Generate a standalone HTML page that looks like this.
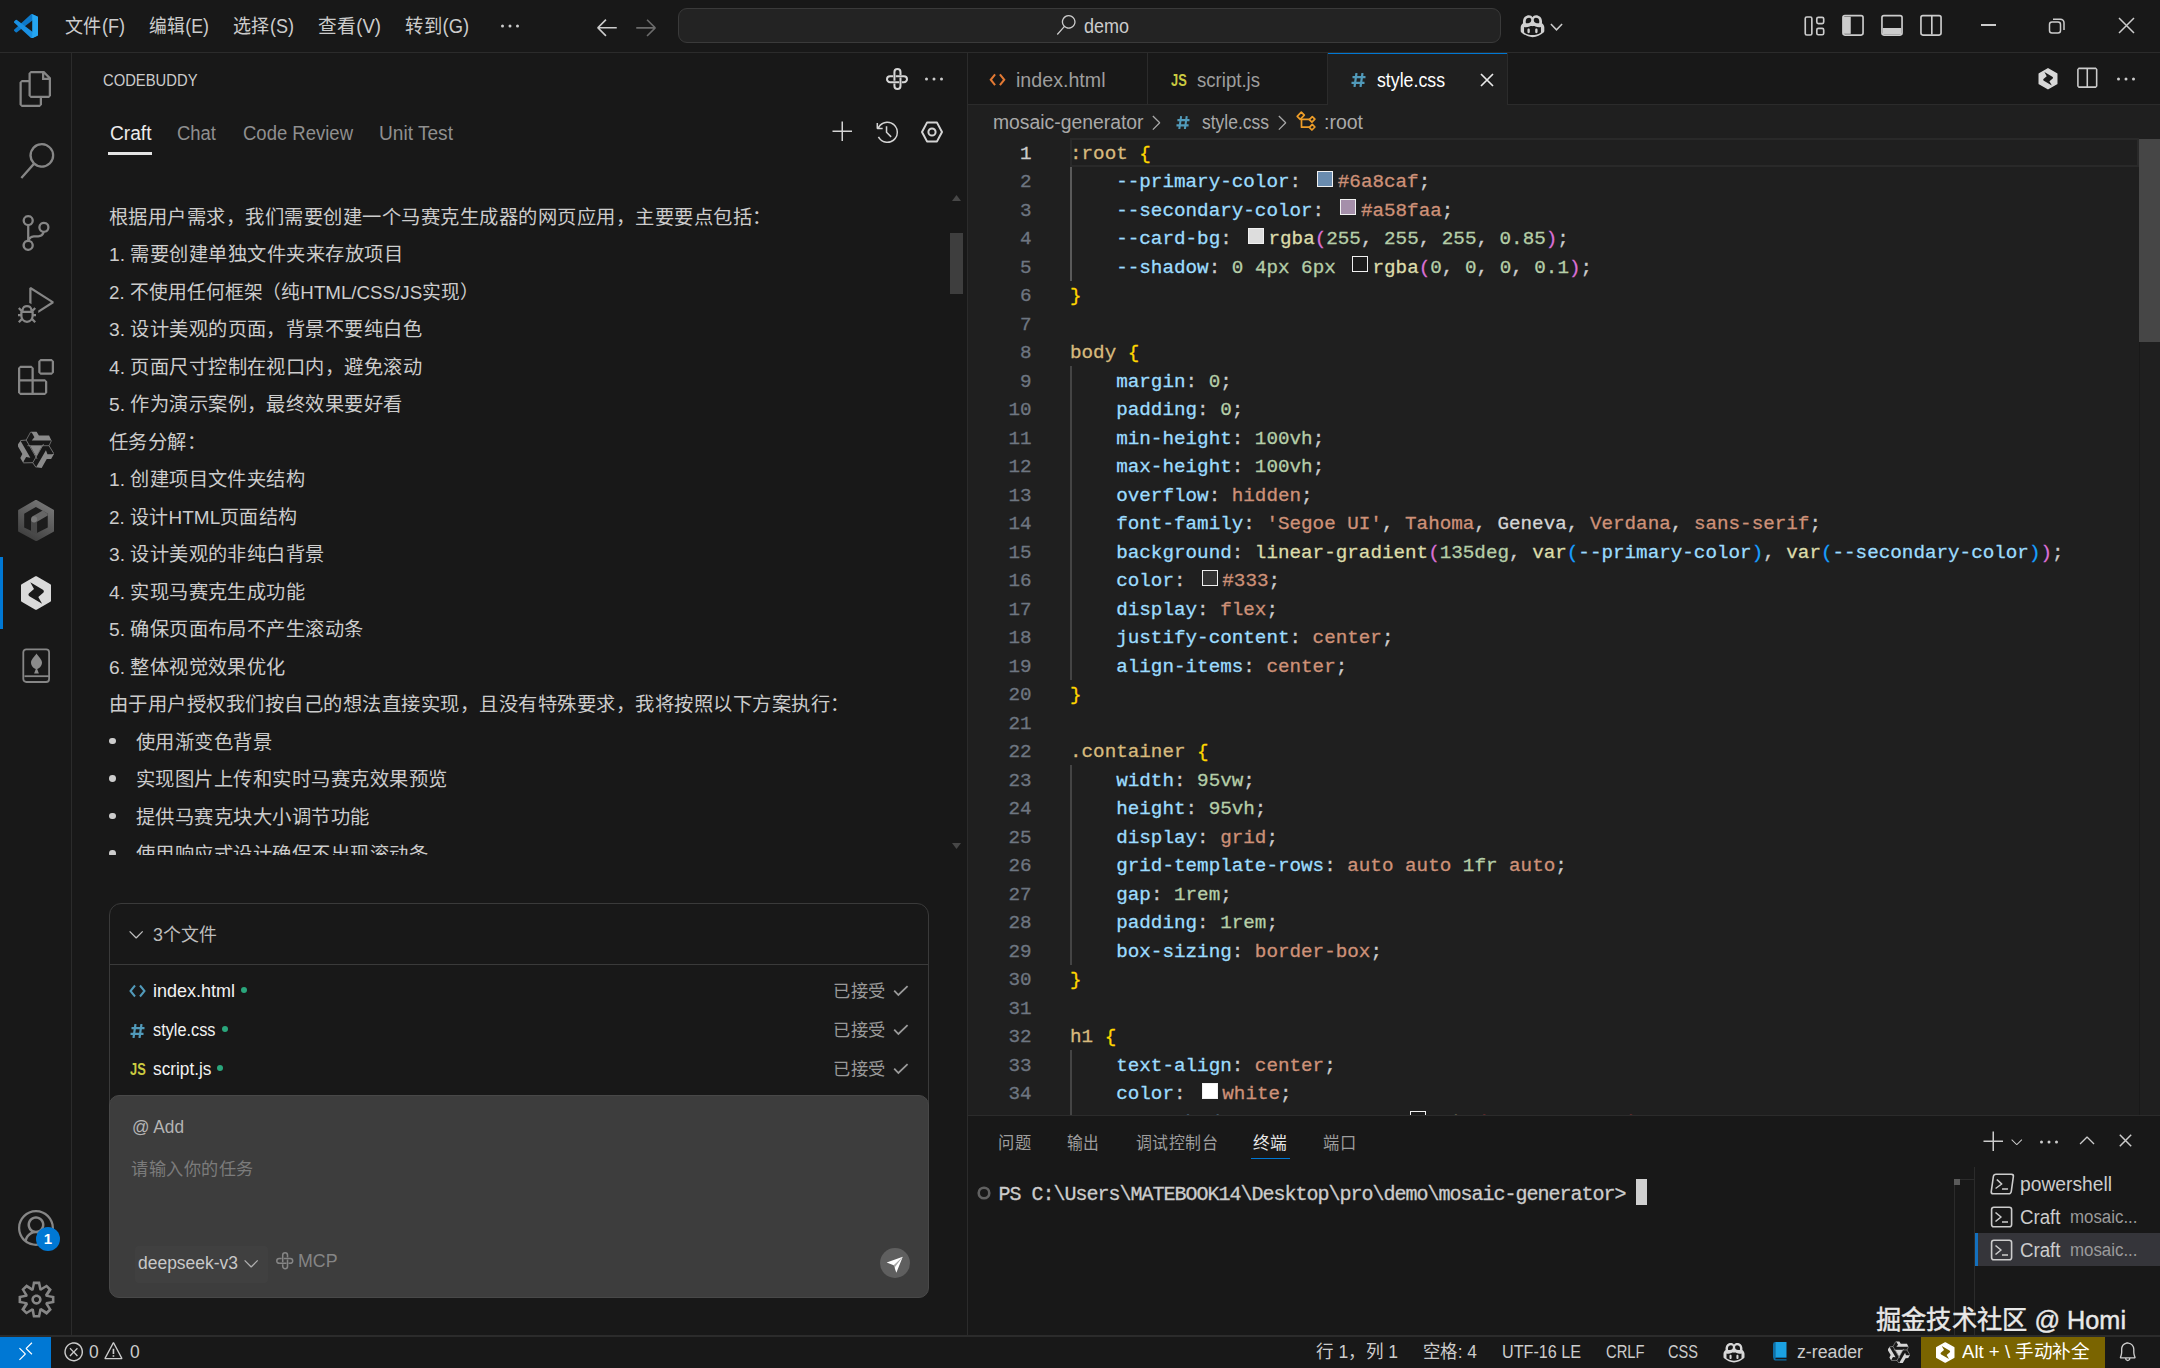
<!DOCTYPE html>
<html lang="zh-CN"><head><meta charset="utf-8"><title>style.css - demo - Visual Studio Code</title>
<style>
html,body{margin:0;padding:0;}
body{width:2160px;height:1368px;overflow:hidden;position:relative;background:#181818;font-family:"Liberation Sans", sans-serif;}
div,span.t,svg{position:absolute;}
span.t{white-space:nowrap;transform-origin:0 50%;}
.c{position:absolute;white-space:pre;font-family:"Liberation Mono", monospace;font-size:19.25px;line-height:28.5px;left:1070px;color:#cccccc;-webkit-text-stroke:0.3px;}
.c i{font-style:normal;}
.sw{display:inline-block;box-sizing:border-box;width:16px;height:16px;margin:0 4.6px;border:1.6px solid #f0f0f0;vertical-align:0.5px;}
</style></head>
<body>
<div style="left:0px;top:0px;width:2160px;height:1368px;background:#181818;"></div>
<div style="left:968px;top:105px;width:1192px;height:1010px;background:#1f1f1f;"></div>
<div style="left:0px;top:52px;width:2160px;height:1px;background:#2b2b2b;"></div>
<div style="left:71px;top:53px;width:1px;height:1283px;background:#2b2b2b;"></div>
<div style="left:967px;top:53px;width:1px;height:1283px;background:#2b2b2b;"></div>
<div style="left:968px;top:104px;width:1192px;height:1px;background:#2b2b2b;"></div>
<div style="left:968px;top:1115px;width:1192px;height:1px;background:#2b2b2b;"></div>
<div style="left:0px;top:1335px;width:2160px;height:2px;background:#2b2b2b;"></div>
<svg style="left:14px;top:13.6px;" width="24.3" height="24.3" viewBox="0 0 100 100"><path fill="#0d78c8" d="M96.5 10.8 75.9.9a6.2 6.2 0 0 0-7.1 1.2L1.3 63.600a4.200 4.200 0 0 0 0 6.200l5.500 5a4.200 4.200 0 0 0 5.300.200L93.300 13.500c2.700-2.100 6.700-.100 6.700 3.300v-.200a6.300 6.300 0 0 0-3.500-5.800z"/><path fill="#1a90e2" d="M96.500 89.200 75.900 99.100a6.200 6.200 0 0 1-7.100-1.200L1.300 36.400a4.200 4.200 0 0 1 0-6.200l5.500-5a4.200 4.200 0 0 1 5.300-.2l81.200 61.500c2.700 2.100 6.700.1 6.700-3.300v.2a6.300 6.300 0 0 1-3.500 5.800z"/><path fill="#25a6f2" d="M75.900 99.100a6.200 6.200 0 0 1-7.100-1.200c2.300 2.300 6.200.700 6.200-2.600V4.700c0-3.300-3.900-4.900-6.200-2.600a6.200 6.200 0 0 1 7.100-1.200l20.600 9.900a6.200 6.200 0 0 1 3.500 5.600v67.200a6.200 6.200 0 0 1-3.500 5.600z"/></svg>
<span class="t" style="transform:scaleX(0.9244);top:10.74px;font-size:19.5px;line-height:30px;color:#cccccc;left:64.5px;">文件(F)</span>
<span class="t" style="transform:scaleX(0.9091);top:10.74px;font-size:19.5px;line-height:30px;color:#cccccc;left:149px;">编辑(E)</span>
<span class="t" style="transform:scaleX(0.9242);top:10.74px;font-size:19.5px;line-height:30px;color:#cccccc;left:233px;">选择(S)</span>
<span class="t" style="transform:scaleX(0.9545);top:10.74px;font-size:19.5px;line-height:30px;color:#cccccc;left:318px;">查看(V)</span>
<span class="t" style="transform:scaleX(0.939);top:10.74px;font-size:19.5px;line-height:30px;color:#cccccc;left:405px;">转到(G)</span>
<svg style="left:498px;top:14px;" width="24" height="24" viewBox="0 0 16 16"><path fill="#cccccc" d="M4 8a1 1 0 1 1-2 0 1 1 0 0 1 2 0zm5 0a1 1 0 1 1-2 0 1 1 0 0 1 2 0zm5 0a1 1 0 1 1-2 0 1 1 0 0 1 2 0z"/></svg>
<svg style="left:594px;top:14px;" width="26" height="26" viewBox="0 0 16 16"><path fill="#cccccc" d="M7 3.093l-5 5V8.8l5 5 .707-.707-4.146-4.147H14v-1H3.56L7.708 3.8 7 3.093z"/></svg>
<svg style="left:633px;top:14px;" width="26" height="26" viewBox="0 0 16 16"><path fill="#6b6b6b" d="M9 13.887l5-5V8.18l-5-5-.707.707 4.146 4.147H2v1h10.44L8.292 13.18l.707.707z"/></svg>
<div style="left:678px;top:8px;width:823px;height:34.5px;background:#232323;box-sizing:border-box;border:1px solid #3a3a3a;border-radius:9px;"></div>
<svg style="left:1056px;top:15px;" width="20" height="20" viewBox="0 0 24 24"><path fill="#cccccc" d="M15.25 0a8.25 8.25 0 0 0-6.18 13.72L1 22.88l1.12 1 8.05-9.12A8.251 8.251 0 1 0 15.25.01V0zm0 15a6.75 6.75 0 1 1 0-13.5 6.75 6.75 0 0 1 0 13.5z"/></svg>
<span class="t" style="transform:scaleX(0.9225);top:10.54px;font-size:19.5px;line-height:30px;color:#cccccc;left:1084px;">demo</span>
<svg style="left:1519px;top:13px;" width="27" height="27" viewBox="0 0 16 16"><path fill="#d0d0d0" fill-rule="evenodd" d="M3.500 2.200C4.500 1.300 6.100 1 7.200 1.600c.400.200.600.500.800.900.200-.400.400-.700.800-.900C9.900 1 11.500 1.300 12.500 2.200c1 1 1.300 2.400 1.100 3.800.800.600 1.400 1.500 1.400 2.500v2.200c0 .300-.100.600-.400.800C12.800 13 10.500 14.300 8 14.300S3.200 13 1.400 11.500c-.300-.200-.400-.500-.400-.800V8.500c0-1 .600-1.900 1.400-2.500-.200-1.400.100-2.800 1.100-3.800zM4.600 3.300c-.600.600-.800 1.700-.500 2.700.900.200 2.300-.100 2.800-.700.400-.500.500-1.500.100-2.100-.500-.600-1.700-.500-2.400.100zm6.800 0c-.700-.600-1.900-.700-2.400-.100-.400.600-.300 1.600.100 2.100.500.600 1.900.900 2.800.700.300-1 .100-2.100-.500-2.700zM3 8.300v3.200c1.400 1 3.200 1.600 5 1.600s3.600-.600 5-1.600V8.300c-.700.200-2.200.200-3.300-.300-.600-.300-1.200-.300-1.700-.200-.500-.100-1.100-.100-1.700.200-1.100.500-2.600.500-3.300.300zm2.700.900c.400 0 .700.300.700.700v1.400c0 .400-.300.700-.700.700S5 11.700 5 11.300V9.900c0-.400.300-.700.700-.700zm4.600 0c.400 0 .700.300.700.700v1.400c0 .400-.300.700-.700.700s-.700-.300-.700-.700V9.900c0-.400.300-.700.700-.700z"/></svg>
<svg style="left:1550px;top:22.5px;" width="13" height="8.5" viewBox="0 0 13 8.5"><path d="M.900 1L6.500 6.800 12.100 1" fill="none" stroke="#cccccc" stroke-width="1.500"/></svg>
<svg style="left:1803px;top:14.2px;" width="24" height="24" viewBox="0 0 16 16"><g fill="none" stroke="#cccccc" stroke-width="1.1"><rect x="1.500" y="2" width="4.400" height="12" rx="1"/><rect x="9.200" y="2.200" width="4.600" height="4.200" rx="1"/><rect x="9.200" y="9.600" width="4.600" height="4.200" rx="1"/></g></svg>
<svg style="left:1841px;top:13.2px;" width="24" height="24" viewBox="0 0 16 16"><rect x="1.300" y="1.700" width="13.400" height="13" rx="1.300" fill="none" stroke="#cccccc" stroke-width="1.100"/><path fill="#cccccc" d="M1.300 2.500h5.200v11.400H1.300z"/></svg>
<svg style="left:1879.5px;top:13.2px;" width="24" height="24" viewBox="0 0 16 16"><rect x="1.300" y="1.700" width="13.400" height="13" rx="1.300" fill="none" stroke="#cccccc" stroke-width="1.100"/><path fill="#cccccc" d="M1.800 10h12.400v4.200H1.800z"/></svg>
<svg style="left:1918.5px;top:13.2px;" width="24" height="24" viewBox="0 0 16 16"><rect x="1.300" y="1.700" width="13.400" height="13" rx="1.300" fill="none" stroke="#cccccc" stroke-width="1.100"/><path fill="#cccccc" d="M8 2h1.100v12.400H8z"/></svg>
<div style="left:1981px;top:24px;width:15px;height:1.5px;background:#cccccc;"></div>
<svg style="left:2048px;top:16.5px;" width="18" height="18" viewBox="0 0 18 18"><g fill="none" stroke="#cccccc" stroke-width="1.500"><rect x="1.500" y="5" width="11" height="11" rx="2.500"/><path d="M5 2.300h7.500a3.500 3.500 0 0 1 3.500 3.500V13"/></g></svg>
<svg style="left:2118px;top:17px;" width="17" height="17" viewBox="0 0 17 17"><path d="M1 1l15 15M16 1L1 16" stroke="#cccccc" stroke-width="1.500" fill="none"/></svg>
<svg style="left:18px;top:71px;" width="36" height="36" viewBox="0 0 24 24"><path fill="#868686" d="M17.5 0h-9L7 1.5V6H2.5L1 7.5v15.07L2.5 24h12.07L16 22.57V18h4.7l1.3-1.43V4.5L17.5 0zm0 2.12l2.38 2.38H17.5V2.12zm-3 20.38h-12v-15H7v9.07L8.5 18h6v4.5zm6-6h-12v-15H16V6h4.5v10.5z"/></svg>
<svg style="left:19px;top:142.5px;" width="36" height="36" viewBox="0 0 24 24"><path fill="#868686" d="M15.25 0a8.25 8.25 0 0 0-6.18 13.72L1 22.88l1.12 1 8.05-9.12A8.251 8.251 0 1 0 15.25.01V0zm0 15a6.75 6.75 0 1 1 0-13.5 6.75 6.75 0 0 1 0 13.5z"/></svg>
<svg style="left:18px;top:215px;" width="36" height="36" viewBox="0 0 24 24"><path fill="#868686" d="M21.007 8.222A3.738 3.738 0 0 0 15.045 5.2a3.737 3.737 0 0 0 1.156 6.583 2.988 2.988 0 0 1-2.668 1.67h-2.99a4.456 4.456 0 0 0-2.989 1.165V7.4a3.737 3.737 0 1 0-1.494 0v9.117a3.776 3.776 0 1 0 1.816.099 2.99 2.99 0 0 1 2.668-1.667h2.99a4.484 4.484 0 0 0 4.223-3.039 3.736 3.736 0 0 0 3.25-3.687zM4.565 3.738a2.242 2.242 0 1 1 4.484 0 2.242 2.242 0 0 1-4.484 0zm4.484 16.441a2.242 2.242 0 1 1-4.484 0 2.242 2.242 0 0 1 4.484 0zm8.221-9.715a2.242 2.242 0 1 1 0-4.485 2.242 2.242 0 0 1 0 4.485z"/></svg>
<svg style="left:17.5px;top:287px;" width="36" height="36" viewBox="0 0 24 24"><path fill="#868686" d="M10.94 13.5l-1.32 1.32a3.73 3.73 0 0 0-7.24 0L1.06 13.5 0 14.56l1.72 1.72-.22.22V18H0v1.5h1.5v.08c.077.489.214.966.41 1.42L0 22.94 1.06 24l1.65-1.65A4.308 4.308 0 0 0 6 24a4.31 4.31 0 0 0 3.29-1.65L10.94 24 12 22.94 10.09 21c.198-.464.336-.951.41-1.45v-.1H12V18h-1.5v-1.5l-.22-.22L12 14.56l-1.06-1.06zM6 13.5a2.25 2.25 0 0 1 2.25 2.25h-4.5A2.25 2.25 0 0 1 6 13.5zm3 6a3.33 3.33 0 0 1-3 3 3.33 3.33 0 0 1-3-3v-2.25h6v2.25zm14.76-9.9v1.26L13.5 17.37V15.6l8.5-5.37L9 2v9.46a5.07 5.07 0 0 0-1.5-.72V.63L8.64 0l15.12 9.6z"/></svg>
<svg style="left:18px;top:359px;" width="36" height="36" viewBox="0 0 24 24"><path fill="#868686" d="M13.5 1.5L15 0h7.5L24 1.5V9l-1.5 1.5H15L13.5 9V1.5zm1.5 0V9h7.5V1.5H15zM0 15V6l1.5-1.5H9L10.5 6v7.5H18l1.5 1.5v7.5L18 24H1.5L0 22.5V15zm9-1.5V6H1.5v7.5H9zM9 15H1.5v7.5H9V15zm1.5 7.5H18V15h-7.5v7.5z"/></svg>
<svg style="left:18px;top:430.5px;" width="36" height="37" viewBox="-18 -18.5 36 37"><g fill="#8a8a8a" stroke="#8a8a8a" stroke-width="0"><path d="M-5.300-17.800H.600L2.900-14.100H13.100L15.400-9H-4.300L-1.600-12.300L-3.700-16z"/><path d="M-9.800-9.400L-5.300-17.600M15.500-9L13.100-3.800H-8.600" fill="none" stroke-width=".700"/><g transform="rotate(120)"><path d="M-5.300-17.800H.600L2.900-14.100H13.100L15.400-9H-4.300L-1.600-12.300L-3.700-16z"/><path d="M-9.800-9.400L-5.300-17.600M15.500-9L13.100-3.800H-8.600" fill="none" stroke-width=".700"/></g><g transform="rotate(240)"><path d="M-5.300-17.800H.600L2.900-14.100H13.100L15.400-9H-4.300L-1.600-12.300L-3.700-16z"/><path d="M-9.800-9.400L-5.300-17.600M15.500-9L13.100-3.800H-8.600" fill="none" stroke-width=".700"/></g><path d="M-5.900-3.700H6.100L.200 7z"/></g></svg>
<svg style="left:18px;top:500px;" width="36.2" height="41.2" viewBox="0 0 36.200 41.200"><defs><linearGradient id="cg" x1=".7" y1="0" x2=".2" y2="1"><stop offset="0" stop-color="#767676"/><stop offset="1" stop-color="#3c3c3c"/></linearGradient></defs><path fill="url(#cg)" stroke="url(#cg)" stroke-width="2" stroke-linejoin="round" d="M18 .800l17.100 9.900v20.200L18.300 40.200 1.100 30.900V10.700z"/><path fill="#1c1c1c" d="M17.900 6.900l11.850 6.800v13.900L18.300 33.300 6.200 27.600V13.700z"/><path fill="#484848" d="M13 19.400h6.100v14.200l-.800.300-5.300-2.700z"/><path fill="#666666" d="M14.200 16.600L24.800 10.400l4.950 3.300v1.800L19.100 21.700z"/><circle cx="16.100" cy="19.400" r="3.050" fill="#7a7a7a"/></svg>
<div style="left:0px;top:557px;width:3px;height:72px;background:#0078d4;"></div>
<svg style="left:21px;top:576px;" width="30" height="34" viewBox="0 0 30 34"><path fill="#dadada" stroke="#dadada" stroke-width="2.400" stroke-linejoin="round" d="M15 1.400l13.800 7.800v15.600L15 32.600 1.200 24.800V9.200z"/><path fill="#191919" d="M9.300 6.300L21.900 13.700Q23.700 14.900 22.500 16.600L17.300 21.100 21.100 27.700 8.400 20.300Q6.600 19.100 7.800 17.400L13 12.900z"/></svg>
<svg style="left:22px;top:647.5px;" width="28.5" height="35.5" viewBox="0 0 28.5 35.5"><g fill="none" stroke="#868686" stroke-width="1.800"><rect x="1.300" y="1.300" width="25.800" height="32.700" rx="3"/><path d="M2.500 28.200H27"/></g><path fill="#8c8c8c" d="M14.500 5.500C16.500 8.500 20 11.500 20 14.500 20 18 17 20.500 15.200 21L16.900 25.500H12.100L13.800 21C12 20.500 9 18 9 14.500 9 11.500 12.500 8.500 14.500 5.500z"/></svg>
<svg style="left:18px;top:1209.5px;" width="36" height="36" viewBox="0 0 16 16"><path fill="#868686" d="M16 7.992C16 3.58 12.416 0 8 0S0 3.58 0 7.992c0 2.43 1.104 4.62 2.832 6.09.016.016.032.016.032.032.144.112.288.224.448.336.08.048.144.111.224.175A7.98 7.98 0 0 0 8.016 16a7.98 7.98 0 0 0 4.48-1.375c.08-.048.144-.111.224-.16.144-.111.304-.223.448-.335.016-.016.032-.016.032-.032 1.696-1.487 2.8-3.676 2.8-6.106zm-8 7.001c-1.504 0-2.88-.48-4.016-1.279.016-.128.048-.255.08-.383a4.17 4.17 0 0 1 .416-.991c.176-.304.384-.576.64-.816.24-.24.528-.463.816-.639.304-.176.624-.304.976-.4A4.15 4.15 0 0 1 8 10.342a4.185 4.185 0 0 1 2.928 1.166c.368.368.656.8.864 1.295.112.288.192.592.24.911A7.03 7.03 0 0 1 8 14.993zm-2.448-7.4a2.49 2.49 0 0 1-.208-1.024c0-.351.064-.703.208-1.023.144-.32.336-.607.576-.847.24-.24.528-.431.848-.575.32-.144.672-.208 1.024-.208.368 0 .704.064 1.024.208.32.144.608.336.848.575.24.24.432.528.576.847.144.32.208.672.208 1.023 0 .368-.064.704-.208 1.023a2.84 2.84 0 0 1-.576.848 2.84 2.84 0 0 1-.848.575 2.715 2.715 0 0 1-2.064 0 2.84 2.84 0 0 1-.848-.575 2.526 2.526 0 0 1-.56-.848zm7.424 5.306c0-.032-.016-.048-.016-.08a5.22 5.22 0 0 0-.688-1.406 4.883 4.883 0 0 0-1.088-1.135 5.207 5.207 0 0 0-1.04-.608 2.82 2.82 0 0 0 .464-.383 4.2 4.2 0 0 0 .624-.784 3.624 3.624 0 0 0 .528-1.934 3.71 3.71 0 0 0-.288-1.47 3.799 3.799 0 0 0-.816-1.199 3.845 3.845 0 0 0-1.2-.8 3.72 3.72 0 0 0-1.472-.287 3.72 3.72 0 0 0-1.472.288 3.631 3.631 0 0 0-1.2.815 3.84 3.84 0 0 0-.8 1.199 3.71 3.71 0 0 0-.288 1.47c0 .352.048.688.144 1.007.096.336.224.64.4.927.16.288.384.544.624.784.144.144.304.271.48.383a5.12 5.12 0 0 0-1.04.624c-.416.32-.784.703-1.088 1.119a4.999 4.999 0 0 0-.688 1.406c-.016.032-.016.064-.016.08C1.776 11.636.992 9.91.992 7.992.992 4.14 4.144.991 8 .991s7.008 3.149 7.008 7.001a6.96 6.96 0 0 1-2.032 4.907z"/></svg>
<div style="left:36px;top:1227px;width:24px;height:24px;background:#0078d4;border-radius:12px;"></div>
<span class="t" style="top:1224.3px;font-size:15px;line-height:30px;color:#ffffff;left:43.8px;font-weight:700;">1</span>
<svg style="left:15.5px;top:1278.5px;" width="41" height="41" viewBox="0 0 16 16"><path fill="#868686" d="M9.1 4.4L8.6 2H7.4l-.5 2.4-.7.3-2-1.3-.9.8 1.3 2-.2.7-2.4.5v1.2l2.4.5.3.8-1.3 2 .8.8 2-1.3.8.3.4 2.3h1.2l.5-2.4.8-.3 2 1.3.8-.8-1.3-2 .3-.8 2.3-.4V7.4l-2.4-.5-.3-.8 1.3-2-.8-.8-2 1.3-.7-.2zM9.4 1l.5 2.4L12 2.1l2 2-1.4 2.1 2.4.4v2.8l-2.4.5L14 12l-2 2-2.1-1.4-.5 2.4H6.6l-.5-2.4L4 13.9l-2-2 1.4-2.1L1 9.4V6.6l2.4-.5L2.1 4l2-2 2.1 1.4.4-2.4h2.8zm.6 7c0 1.1-.9 2-2 2s-2-.9-2-2 .9-2 2-2 2 .9 2 2zM8 9c.6 0 1-.4 1-1s-.4-1-1-1-1 .4-1 1 .4 1 1 1z"/></svg>
<span class="t" style="transform:scaleX(0.8963);top:65.28px;font-size:16.5px;line-height:30px;color:#cccccc;left:102.5px;">CODEBUDDY</span>
<svg style="left:886.4px;top:67.9px;" width="22" height="22" viewBox="0 0 24 24"><g fill="none" stroke="#d6d6d6" stroke-width="2.2" stroke-linecap="butt"><path d="M9.200 13.900V4.400a3.300 3.300 0 0 1 6.600 0V7.600M15.800 10.400V19.600a3.300 3.300 0 0 1-6.600 0V16.900"/><path d="M7.800 8.900H4.400a3.300 3.300 0 0 0 0 6.600H14.400M17.200 15.500H19.600a3.300 3.300 0 0 0 0-6.600H10.600"/></g></svg>
<svg style="left:921.5px;top:67px;" width="24" height="24" viewBox="0 0 16 16"><path fill="#cccccc" d="M4 8a1 1 0 1 1-2 0 1 1 0 0 1 2 0zm5 0a1 1 0 1 1-2 0 1 1 0 0 1 2 0zm5 0a1 1 0 1 1-2 0 1 1 0 0 1 2 0z"/></svg>
<span class="t" style="transform:scaleX(0.9819);top:118.24px;font-size:19.5px;line-height:30px;color:#ececec;left:109.5px;">Craft</span>
<div style="left:108px;top:152px;width:44px;height:3px;background:#e4e4e4;"></div>
<span class="t" style="transform:scaleX(0.9465);top:118.24px;font-size:19.5px;line-height:30px;color:#8f8f8f;left:177px;">Chat</span>
<span class="t" style="transform:scaleX(0.9484);top:118.24px;font-size:19.5px;line-height:30px;color:#8f8f8f;left:242.5px;">Code Review</span>
<span class="t" style="transform:scaleX(0.9799);top:118.24px;font-size:19.5px;line-height:30px;color:#8f8f8f;left:379px;">Unit Test</span>
<svg style="left:831px;top:119.5px;" width="24" height="24" viewBox="0 0 16 16"><path fill="#d4d4d4" d="M14 7v1H8v6H7V8H1V7h6V1h1v6h6z"/></svg>
<svg style="left:875px;top:119.8px;" width="24.6" height="24.6" viewBox="0 0 16 16"><path fill="#d4d4d4" d="M13.507 12.324a7 7 0 0 0 .065-8.56A7 7 0 0 0 2 4.393V2H1v3.5l.5.5H5V5H2.811a6.008 6.008 0 1 1-.135 5.77l-.887.462a7 7 0 0 0 11.718 1.092zm-3.361-.97l.708-.707L8 7.792V4H7v4l.146.354 3 3z"/></svg>
<svg style="left:920px;top:120px;" width="24" height="24" viewBox="0 0 24 24"><g fill="none" stroke="#d4d4d4" stroke-width="2"><path d="M7 2.600h10l5 9.400-5 9.400H7L2 12z" stroke-linejoin="round"/><circle cx="12" cy="12" r="3.600"/></g></svg>
<div style="left:72px;top:180px;width:880px;height:675px;overflow:hidden;">
<span class="t" style="transform:scaleX(1.0263);top:22.69px;font-size:18.8px;line-height:30px;color:#cccccc;left:37px;">根据用户需求，我们需要创建一个马赛克生成器的网页应用，主要要点包括：</span>
<span class="t" style="transform:scaleX(1.0248);top:60.19px;font-size:18.8px;line-height:30px;color:#cccccc;left:37px;">1. 需要创建单独文件夹来存放项目</span>
<span class="t" style="transform:scaleX(0.9973);top:97.69px;font-size:18.8px;line-height:30px;color:#cccccc;left:37px;">2. 不使用任何框架（纯HTML/CSS/JS实现）</span>
<span class="t" style="transform:scaleX(1.0232);top:135.19px;font-size:18.8px;line-height:30px;color:#cccccc;left:37px;">3. 设计美观的页面，背景不要纯白色</span>
<span class="t" style="transform:scaleX(1.0232);top:172.69px;font-size:18.8px;line-height:30px;color:#cccccc;left:37px;">4. 页面尺寸控制在视口内，避免滚动</span>
<span class="t" style="transform:scaleX(1.023);top:210.19px;font-size:18.8px;line-height:30px;color:#cccccc;left:37px;">5. 作为演示案例，最终效果要好看</span>
<span class="t" style="transform:scaleX(1.0263);top:247.69px;font-size:18.8px;line-height:30px;color:#cccccc;left:37px;">任务分解：</span>
<span class="t" style="transform:scaleX(1.0214);top:285.19px;font-size:18.8px;line-height:30px;color:#cccccc;left:37px;">1. 创建项目文件夹结构</span>
<span class="t" style="transform:scaleX(1.0107);top:322.69px;font-size:18.8px;line-height:30px;color:#cccccc;left:37px;">2. 设计HTML页面结构</span>
<span class="t" style="transform:scaleX(1.0219);top:360.19px;font-size:18.8px;line-height:30px;color:#cccccc;left:37px;">3. 设计美观的非纯白背景</span>
<span class="t" style="transform:scaleX(1.0214);top:397.69px;font-size:18.8px;line-height:30px;color:#cccccc;left:37px;">4. 实现马赛克生成功能</span>
<span class="t" style="transform:scaleX(1.0225);top:435.19px;font-size:18.8px;line-height:30px;color:#cccccc;left:37px;">5. 确保页面布局不产生滚动条</span>
<span class="t" style="transform:scaleX(1.0209);top:472.69px;font-size:18.8px;line-height:30px;color:#cccccc;left:37px;">6. 整体视觉效果优化</span>
<span class="t" style="transform:scaleX(1.0263);top:510.19px;font-size:18.8px;line-height:30px;color:#cccccc;left:37px;">由于用户授权我们按自己的想法直接实现，且没有特殊要求，我将按照以下方案执行：</span>
<span class="t" style="transform:scaleX(1.0263);top:547.69px;font-size:18.8px;line-height:30px;color:#cccccc;left:64px;">使用渐变色背景</span>
<div style="left:37.2px;top:557.6px;width:6.8px;height:6.8px;background:#cccccc;border-radius:50%;"></div>
<span class="t" style="transform:scaleX(1.0263);top:585.19px;font-size:18.8px;line-height:30px;color:#cccccc;left:64px;">实现图片上传和实时马赛克效果预览</span>
<div style="left:37.2px;top:595.1px;width:6.8px;height:6.8px;background:#cccccc;border-radius:50%;"></div>
<span class="t" style="transform:scaleX(1.0263);top:622.69px;font-size:18.8px;line-height:30px;color:#cccccc;left:64px;">提供马赛克块大小调节功能</span>
<div style="left:37.2px;top:632.6px;width:6.8px;height:6.8px;background:#cccccc;border-radius:50%;"></div>
<span class="t" style="transform:scaleX(1.0263);top:660.19px;font-size:18.8px;line-height:30px;color:#cccccc;left:64px;">使用响应式设计确保不出现滚动条</span>
<div style="left:37.2px;top:670.1px;width:6.8px;height:6.8px;background:#cccccc;border-radius:50%;"></div>
</div>
<div style="left:950px;top:233px;width:13px;height:61px;background:#3e3e3e;"></div>
<svg style="left:952px;top:195px;" width="9" height="6" viewBox="0 0 9 6"><path d="M4.500 0L9 6H0z" fill="#474747"/></svg>
<svg style="left:952px;top:843px;" width="9" height="6" viewBox="0 0 9 6"><path d="M4.500 6L9 0H0z" fill="#474747"/></svg>
<div style="left:109px;top:903px;width:820px;height:215px;box-sizing:border-box;border:1px solid #3a3a3a;border-radius:12px;"></div>
<div style="left:110px;top:964px;width:818px;height:1px;background:#3a3a3a;"></div>
<svg style="left:124.8px;top:923px;" width="22.4" height="22.4" viewBox="0 0 16 16"><path fill="#c0c0c0" d="M7.976 10.072l4.357-4.357.62.618L8.284 11h-.618L3 6.333l.619-.618 4.357 4.357z"/></svg>
<span class="t" style="transform:scaleX(0.9919);top:920.26px;font-size:18px;line-height:30px;color:#bdbdbd;left:152.5px;">3个文件</span>
<span class="t" style="transform:scaleX(0.9994);top:975.76px;font-size:18px;line-height:30px;color:#f2f2f2;left:152.5px;">index.html</span>
<div style="left:240.6px;top:986.6px;width:6.8px;height:6.8px;background:#2aa67c;border-radius:50%;"></div>
<span class="t" style="transform:scaleX(0.9815);top:975.9px;font-size:17.6px;line-height:30px;color:#9a9a9a;left:833px;">已接受</span>
<svg style="left:893px;top:985px;" width="16" height="12" viewBox="0 0 16 12"><path d="M1.200 5.600L5.400 10 14.600 1.200" fill="none" stroke="#9a9a9a" stroke-width="1.800"/></svg>
<span class="t" style="transform:scaleX(0.9056);top:1014.76px;font-size:18px;line-height:30px;color:#f2f2f2;left:152.5px;">style.css</span>
<div style="left:221.6px;top:1025.6px;width:6.8px;height:6.8px;background:#2aa67c;border-radius:50%;"></div>
<span class="t" style="transform:scaleX(0.9815);top:1014.9px;font-size:17.6px;line-height:30px;color:#9a9a9a;left:833px;">已接受</span>
<svg style="left:893px;top:1024px;" width="16" height="12" viewBox="0 0 16 12"><path d="M1.200 5.600L5.400 10 14.600 1.200" fill="none" stroke="#9a9a9a" stroke-width="1.800"/></svg>
<span class="t" style="transform:scaleX(0.9588);top:1053.76px;font-size:18px;line-height:30px;color:#f2f2f2;left:152.5px;">script.js</span>
<div style="left:216.6px;top:1064.6px;width:6.8px;height:6.8px;background:#2aa67c;border-radius:50%;"></div>
<span class="t" style="transform:scaleX(0.9815);top:1053.9px;font-size:17.6px;line-height:30px;color:#9a9a9a;left:833px;">已接受</span>
<svg style="left:893px;top:1063px;" width="16" height="12" viewBox="0 0 16 12"><path d="M1.200 5.600L5.400 10 14.600 1.200" fill="none" stroke="#9a9a9a" stroke-width="1.800"/></svg>
<svg style="left:128.5px;top:984px;" width="17" height="14" viewBox="0 0 17 14"><path d="M6 1.500L1.500 7 6 12.500M11 1.500L15.500 7 11 12.500" fill="none" stroke="#519aba" stroke-width="2"/></svg>
<svg style="left:129.5px;top:1023.5px;" width="15" height="14" viewBox="0 0 15 14"><path d="M5.500 0L3.500 14M11.500 0L9.500 14M1.500 4.200H14.500M.500 9.800H13.500" fill="none" stroke="#519aba" stroke-width="2.200"/></svg>
<span class="t" style="top:1054.28px;font-size:16.5px;line-height:30px;color:#cbcb41;left:129.5px;font-weight:700;transform:scaleX(.78);transform-origin:0 0;">JS</span>
<div style="left:109px;top:1095px;width:820px;height:203px;background:#3d3d3d;box-sizing:border-box;border:1px solid #484848;border-radius:10px;"></div>
<span class="t" style="transform:scaleX(0.9574);top:1111.76px;font-size:18px;line-height:30px;color:#b4b4b4;left:132px;">@ Add</span>
<span class="t" style="transform:scaleX(0.9762);top:1153.9px;font-size:17.6px;line-height:30px;color:#7b7b7b;left:131px;">请输入你的任务</span>
<div style="left:135px;top:1246px;width:133px;height:36.5px;background:#404040;border-radius:4px;"></div>
<span class="t" style="transform:scaleX(0.9701);top:1247.76px;font-size:18px;line-height:30px;color:#c8c8c8;left:138px;">deepseek-v3</span>
<svg style="left:239.8px;top:1252px;" width="22.4" height="22.4" viewBox="0 0 16 16"><path fill="#b0b0b0" d="M7.976 10.072l4.357-4.357.62.618L8.284 11h-.618L3 6.333l.619-.618 4.357 4.357z"/></svg>
<svg style="left:276px;top:1252px;" width="17.5" height="17.5" viewBox="0 0 24 24"><g fill="none" stroke="#858585" stroke-width="2.1" stroke-linecap="butt"><path d="M9.200 13.900V4.400a3.300 3.300 0 0 1 6.600 0V7.600M15.800 10.400V19.600a3.300 3.300 0 0 1-6.600 0V16.900"/><path d="M7.800 8.900H4.400a3.300 3.300 0 0 0 0 6.600H14.400M17.200 15.500H19.600a3.300 3.300 0 0 0 0-6.600H10.600"/></g></svg>
<span class="t" style="transform:scaleX(1.0157);top:1245.64px;font-size:17.5px;line-height:30px;color:#858585;left:297.5px;">MCP</span>
<div style="left:880px;top:1248px;width:30px;height:30px;background:#5f5f5f;border-radius:50%;"></div>
<svg style="left:884.5px;top:1255px;" width="20" height="20" viewBox="0 0 18 18"><path fill="#ffffff" d="M16 1.500L1.500 6.800l6.300 2.400L10.200 16z"/><path fill="#5f5f5f" d="M7.800 9.200L16 1.500 9 10.700l-.400 3.300z" opacity=".55"/></svg>
<svg style="left:989px;top:72.5px;" width="17" height="13.5" viewBox="0 0 17 14"><path d="M6 1.500L1.500 7 6 12.500M11 1.500L15.500 7 11 12.500" fill="none" stroke="#e37933" stroke-width="2.100"/></svg>
<span class="t" style="transform:scaleX(1.007);top:64.74px;font-size:19.5px;line-height:30px;color:#9d9d9d;left:1016px;">index.html</span>
<div style="left:1147px;top:53px;width:1px;height:51px;background:#2b2b2b;"></div>
<span class="t" style="top:64.78px;font-size:16.5px;line-height:30px;color:#cbcb41;left:1170.5px;font-weight:700;transform:scaleX(.78);transform-origin:0 0;">JS</span>
<span class="t" style="transform:scaleX(0.9532);top:64.74px;font-size:19.5px;line-height:30px;color:#9d9d9d;left:1197px;">script.js</span>
<div style="left:1327px;top:53px;width:1px;height:51px;background:#2b2b2b;"></div>
<div style="left:1328px;top:53px;width:179px;height:52px;background:#1f1f1f;"></div>
<div style="left:1328px;top:53px;width:179px;height:1px;background:#0078d4;"></div>
<div style="left:1507px;top:53px;width:1px;height:51px;background:#2b2b2b;"></div>
<svg style="left:1350.5px;top:72.5px;" width="15" height="14" viewBox="0 0 15 14"><path d="M5.500 0L3.500 14M11.500 0L9.500 14M1.500 4.200H14.500M.500 9.800H13.500" fill="none" stroke="#519aba" stroke-width="2.200"/></svg>
<span class="t" style="transform:scaleX(0.9095);top:64.74px;font-size:19.5px;line-height:30px;color:#ffffff;left:1377px;">style.css</span>
<svg style="left:1479.5px;top:72.5px;" width="14" height="14" viewBox="0 0 14 14"><path d="M1 1l12 12M13 1L1 13" stroke="#e8e8e8" stroke-width="1.700" fill="none"/></svg>
<svg style="left:2038px;top:68px;" width="20" height="21.5" viewBox="0 0 30 34"><path fill="#d8d8d8" stroke="#d8d8d8" stroke-width="2.400" stroke-linejoin="round" d="M15 1.400l13.800 7.800v15.600L15 32.600 1.200 24.800V9.200z"/><path fill="#1b1b1b" d="M9.300 6.300L21.900 13.700Q23.700 14.900 22.500 16.600L17.300 21.100 21.100 27.700 8.400 20.300Q6.600 19.100 7.800 17.400L13 12.900z"/></svg>
<svg style="left:2074px;top:66px;" width="25" height="25" viewBox="0 0 16 16"><path fill="#cccccc" d="M14 1H3L2 2v11l1 1h11l1-1V2l-1-1zM8 13H3V2h5v11zm6 0H9V2h5v11z"/></svg>
<svg style="left:2113.5px;top:67px;" width="24" height="24" viewBox="0 0 16 16"><path fill="#cccccc" d="M4 8a1 1 0 1 1-2 0 1 1 0 0 1 2 0zm5 0a1 1 0 1 1-2 0 1 1 0 0 1 2 0zm5 0a1 1 0 1 1-2 0 1 1 0 0 1 2 0z"/></svg>
<span class="t" style="transform:scaleX(0.9919);top:107.24px;font-size:19.5px;line-height:30px;color:#a9a9a9;left:992.5px;">mosaic-generator</span>
<svg style="left:1143.5px;top:110.5px;" width="23.5" height="23.5" viewBox="0 0 16 16"><path fill="#a9a9a9" d="M10.072 8.024L5.715 3.667l.618-.62L11 7.716v.618L6.333 13l-.618-.619 4.357-4.357z"/></svg>
<svg style="left:1175.5px;top:115.5px;" width="14" height="13.5" viewBox="0 0 15 14"><path d="M5.500 0L3.500 14M11.500 0L9.500 14M1.500 4.200H14.500M.500 9.800H13.500" fill="none" stroke="#519aba" stroke-width="2.200"/></svg>
<span class="t" style="transform:scaleX(0.8961);top:107.24px;font-size:19.5px;line-height:30px;color:#a9a9a9;left:1202px;">style.css</span>
<svg style="left:1270px;top:110.5px;" width="23.5" height="23.5" viewBox="0 0 16 16"><path fill="#a9a9a9" d="M10.072 8.024L5.715 3.667l.618-.62L11 7.716v.618L6.333 13l-.618-.619 4.357-4.357z"/></svg>
<svg style="left:1295px;top:110px;" width="22" height="22" viewBox="0 0 22 22"><g fill="none" stroke="#ee9d28" stroke-width="1.700" stroke-linejoin="round"><path d="M2.200 6.300L6.300 2.200l3 3-4.100 4.100z"/><path d="M14.300 9.600l3-3 2.600 2.600-3 3z"/><path d="M14.300 17.400l3-3 2.600 2.600-3 3z"/><path d="M6.500 8.500v8.700h8.300M6.500 9.300h8.300"/></g></svg>
<span class="t" style="transform:scaleX(0.9992);top:107.24px;font-size:19.5px;line-height:30px;color:#a9a9a9;left:1324px;">:root</span>
<div style="left:0;top:105px;width:2160px;height:1010px;overflow:hidden;"><div style="left:0;top:-105px;width:2160px;height:1368px;">
<div style="left:1070px;top:138px;width:1069px;height:28.5px;box-sizing:border-box;border:2px solid #292929;"></div>
<div style="left:1070px;top:166.5px;width:1.5px;height:114.0px;background:#5a5a5a;"></div>
<div style="left:1070px;top:366.0px;width:1.5px;height:313.5px;background:#444444;"></div>
<div style="left:1070px;top:765.0px;width:1.5px;height:199.5px;background:#444444;"></div>
<div style="left:1070px;top:1050.0px;width:1.5px;height:114.0px;background:#444444;"></div>
<div class="c" style="top:139.92px"><i style="color:#d7ba7d">:root</i><i style="color:#cccccc"> </i><i style="color:#ffd700">{</i></div>
<div class="c" style="top:168.42px"><i style="color:#cccccc">    </i><i style="color:#9cdcfe">--primary-color</i><i style="color:#cccccc">: </i><i class="sw" style="background:#6a8caf"></i><i style="color:#ce9178">#6a8caf</i><i style="color:#cccccc">;</i></div>
<div class="c" style="top:196.92px"><i style="color:#cccccc">    </i><i style="color:#9cdcfe">--secondary-color</i><i style="color:#cccccc">: </i><i class="sw" style="background:#a58faa"></i><i style="color:#ce9178">#a58faa</i><i style="color:#cccccc">;</i></div>
<div class="c" style="top:225.42px"><i style="color:#cccccc">    </i><i style="color:#9cdcfe">--card-bg</i><i style="color:#cccccc">: </i><i class="sw" style="background:rgba(255,255,255,0.85)"></i><i style="color:#dcdcaa">rgba</i><i style="color:#da70d6">(</i><i style="color:#b5cea8">255</i><i style="color:#cccccc">, </i><i style="color:#b5cea8">255</i><i style="color:#cccccc">, </i><i style="color:#b5cea8">255</i><i style="color:#cccccc">, </i><i style="color:#b5cea8">0.85</i><i style="color:#da70d6">)</i><i style="color:#cccccc">;</i></div>
<div class="c" style="top:253.92px"><i style="color:#cccccc">    </i><i style="color:#9cdcfe">--shadow</i><i style="color:#cccccc">: </i><i style="color:#b5cea8">0</i><i style="color:#cccccc"> </i><i style="color:#b5cea8">4px</i><i style="color:#cccccc"> </i><i style="color:#b5cea8">6px</i><i style="color:#cccccc"> </i><i class="sw" style="background:#1c1c1c"></i><i style="color:#dcdcaa">rgba</i><i style="color:#da70d6">(</i><i style="color:#b5cea8">0</i><i style="color:#cccccc">, </i><i style="color:#b5cea8">0</i><i style="color:#cccccc">, </i><i style="color:#b5cea8">0</i><i style="color:#cccccc">, </i><i style="color:#b5cea8">0.1</i><i style="color:#da70d6">)</i><i style="color:#cccccc">;</i></div>
<div class="c" style="top:282.42px"><i style="color:#ffd700">}</i></div>
<div class="c" style="top:339.42px"><i style="color:#d7ba7d">body</i><i style="color:#cccccc"> </i><i style="color:#ffd700">{</i></div>
<div class="c" style="top:367.92px"><i style="color:#cccccc">    </i><i style="color:#9cdcfe">margin</i><i style="color:#cccccc">: </i><i style="color:#b5cea8">0</i><i style="color:#cccccc">;</i></div>
<div class="c" style="top:396.42px"><i style="color:#cccccc">    </i><i style="color:#9cdcfe">padding</i><i style="color:#cccccc">: </i><i style="color:#b5cea8">0</i><i style="color:#cccccc">;</i></div>
<div class="c" style="top:424.92px"><i style="color:#cccccc">    </i><i style="color:#9cdcfe">min-height</i><i style="color:#cccccc">: </i><i style="color:#b5cea8">100vh</i><i style="color:#cccccc">;</i></div>
<div class="c" style="top:453.42px"><i style="color:#cccccc">    </i><i style="color:#9cdcfe">max-height</i><i style="color:#cccccc">: </i><i style="color:#b5cea8">100vh</i><i style="color:#cccccc">;</i></div>
<div class="c" style="top:481.92px"><i style="color:#cccccc">    </i><i style="color:#9cdcfe">overflow</i><i style="color:#cccccc">: </i><i style="color:#ce9178">hidden</i><i style="color:#cccccc">;</i></div>
<div class="c" style="top:510.42px"><i style="color:#cccccc">    </i><i style="color:#9cdcfe">font-family</i><i style="color:#cccccc">: </i><i style="color:#ce9178">&#x27;Segoe UI&#x27;</i><i style="color:#cccccc">, </i><i style="color:#ce9178">Tahoma</i><i style="color:#cccccc">, </i><i style="color:#d4d4d4">Geneva</i><i style="color:#cccccc">, </i><i style="color:#ce9178">Verdana</i><i style="color:#cccccc">, </i><i style="color:#ce9178">sans-serif</i><i style="color:#cccccc">;</i></div>
<div class="c" style="top:538.92px"><i style="color:#cccccc">    </i><i style="color:#9cdcfe">background</i><i style="color:#cccccc">: </i><i style="color:#dcdcaa">linear-gradient</i><i style="color:#da70d6">(</i><i style="color:#b5cea8">135deg</i><i style="color:#cccccc">, </i><i style="color:#dcdcaa">var</i><i style="color:#179fff">(</i><i style="color:#9cdcfe">--primary-color</i><i style="color:#179fff">)</i><i style="color:#cccccc">, </i><i style="color:#dcdcaa">var</i><i style="color:#179fff">(</i><i style="color:#9cdcfe">--secondary-color</i><i style="color:#179fff">)</i><i style="color:#da70d6">)</i><i style="color:#cccccc">;</i></div>
<div class="c" style="top:567.42px"><i style="color:#cccccc">    </i><i style="color:#9cdcfe">color</i><i style="color:#cccccc">: </i><i class="sw" style="background:#333333"></i><i style="color:#ce9178">#333</i><i style="color:#cccccc">;</i></div>
<div class="c" style="top:595.92px"><i style="color:#cccccc">    </i><i style="color:#9cdcfe">display</i><i style="color:#cccccc">: </i><i style="color:#ce9178">flex</i><i style="color:#cccccc">;</i></div>
<div class="c" style="top:624.42px"><i style="color:#cccccc">    </i><i style="color:#9cdcfe">justify-content</i><i style="color:#cccccc">: </i><i style="color:#ce9178">center</i><i style="color:#cccccc">;</i></div>
<div class="c" style="top:652.92px"><i style="color:#cccccc">    </i><i style="color:#9cdcfe">align-items</i><i style="color:#cccccc">: </i><i style="color:#ce9178">center</i><i style="color:#cccccc">;</i></div>
<div class="c" style="top:681.42px"><i style="color:#ffd700">}</i></div>
<div class="c" style="top:738.42px"><i style="color:#d7ba7d">.container</i><i style="color:#cccccc"> </i><i style="color:#ffd700">{</i></div>
<div class="c" style="top:766.92px"><i style="color:#cccccc">    </i><i style="color:#9cdcfe">width</i><i style="color:#cccccc">: </i><i style="color:#b5cea8">95vw</i><i style="color:#cccccc">;</i></div>
<div class="c" style="top:795.42px"><i style="color:#cccccc">    </i><i style="color:#9cdcfe">height</i><i style="color:#cccccc">: </i><i style="color:#b5cea8">95vh</i><i style="color:#cccccc">;</i></div>
<div class="c" style="top:823.92px"><i style="color:#cccccc">    </i><i style="color:#9cdcfe">display</i><i style="color:#cccccc">: </i><i style="color:#ce9178">grid</i><i style="color:#cccccc">;</i></div>
<div class="c" style="top:852.42px"><i style="color:#cccccc">    </i><i style="color:#9cdcfe">grid-template-rows</i><i style="color:#cccccc">: </i><i style="color:#ce9178">auto</i><i style="color:#cccccc"> </i><i style="color:#ce9178">auto</i><i style="color:#cccccc"> </i><i style="color:#b5cea8">1fr</i><i style="color:#cccccc"> </i><i style="color:#ce9178">auto</i><i style="color:#cccccc">;</i></div>
<div class="c" style="top:880.92px"><i style="color:#cccccc">    </i><i style="color:#9cdcfe">gap</i><i style="color:#cccccc">: </i><i style="color:#b5cea8">1rem</i><i style="color:#cccccc">;</i></div>
<div class="c" style="top:909.42px"><i style="color:#cccccc">    </i><i style="color:#9cdcfe">padding</i><i style="color:#cccccc">: </i><i style="color:#b5cea8">1rem</i><i style="color:#cccccc">;</i></div>
<div class="c" style="top:937.92px"><i style="color:#cccccc">    </i><i style="color:#9cdcfe">box-sizing</i><i style="color:#cccccc">: </i><i style="color:#ce9178">border-box</i><i style="color:#cccccc">;</i></div>
<div class="c" style="top:966.42px"><i style="color:#ffd700">}</i></div>
<div class="c" style="top:1023.42px"><i style="color:#d7ba7d">h1</i><i style="color:#cccccc"> </i><i style="color:#ffd700">{</i></div>
<div class="c" style="top:1051.92px"><i style="color:#cccccc">    </i><i style="color:#9cdcfe">text-align</i><i style="color:#cccccc">: </i><i style="color:#ce9178">center</i><i style="color:#cccccc">;</i></div>
<div class="c" style="top:1080.42px"><i style="color:#cccccc">    </i><i style="color:#9cdcfe">color</i><i style="color:#cccccc">: </i><i class="sw" style="background:#ffffff"></i><i style="color:#ce9178">white</i><i style="color:#cccccc">;</i></div>
<div class="c" style="top:1108.92px"><i style="color:#cccccc">    </i><i style="color:#9cdcfe">text-shadow</i><i style="color:#cccccc">: </i><i style="color:#b5cea8">1px</i><i style="color:#cccccc"> </i><i style="color:#b5cea8">1px</i><i style="color:#cccccc"> </i><i style="color:#b5cea8">3px</i><i style="color:#cccccc"> </i><i class="sw" style="background:#1a1a1a"></i><i style="color:#dcdcaa">rgba</i><i style="color:#e0484a">(</i><i style="color:#b5cea8">0</i><i style="color:#cccccc">, </i><i style="color:#b5cea8">0</i><i style="color:#cccccc">, </i><i style="color:#b5cea8">0</i><i style="color:#cccccc">, </i><i style="color:#b5cea8">0.2</i><i style="color:#e0484a">)</i><i style="color:#cccccc">;</i></div>
<div class="c" style="left:968px;width:63.500px;text-align:right;top:139.92px;color:#cccccc">1</div>
<div class="c" style="left:968px;width:63.500px;text-align:right;top:168.42px;color:#6e7681">2</div>
<div class="c" style="left:968px;width:63.500px;text-align:right;top:196.92px;color:#6e7681">3</div>
<div class="c" style="left:968px;width:63.500px;text-align:right;top:225.42px;color:#6e7681">4</div>
<div class="c" style="left:968px;width:63.500px;text-align:right;top:253.92px;color:#6e7681">5</div>
<div class="c" style="left:968px;width:63.500px;text-align:right;top:282.42px;color:#6e7681">6</div>
<div class="c" style="left:968px;width:63.500px;text-align:right;top:310.92px;color:#6e7681">7</div>
<div class="c" style="left:968px;width:63.500px;text-align:right;top:339.42px;color:#6e7681">8</div>
<div class="c" style="left:968px;width:63.500px;text-align:right;top:367.92px;color:#6e7681">9</div>
<div class="c" style="left:968px;width:63.500px;text-align:right;top:396.42px;color:#6e7681">10</div>
<div class="c" style="left:968px;width:63.500px;text-align:right;top:424.92px;color:#6e7681">11</div>
<div class="c" style="left:968px;width:63.500px;text-align:right;top:453.42px;color:#6e7681">12</div>
<div class="c" style="left:968px;width:63.500px;text-align:right;top:481.92px;color:#6e7681">13</div>
<div class="c" style="left:968px;width:63.500px;text-align:right;top:510.42px;color:#6e7681">14</div>
<div class="c" style="left:968px;width:63.500px;text-align:right;top:538.92px;color:#6e7681">15</div>
<div class="c" style="left:968px;width:63.500px;text-align:right;top:567.42px;color:#6e7681">16</div>
<div class="c" style="left:968px;width:63.500px;text-align:right;top:595.92px;color:#6e7681">17</div>
<div class="c" style="left:968px;width:63.500px;text-align:right;top:624.42px;color:#6e7681">18</div>
<div class="c" style="left:968px;width:63.500px;text-align:right;top:652.92px;color:#6e7681">19</div>
<div class="c" style="left:968px;width:63.500px;text-align:right;top:681.42px;color:#6e7681">20</div>
<div class="c" style="left:968px;width:63.500px;text-align:right;top:709.92px;color:#6e7681">21</div>
<div class="c" style="left:968px;width:63.500px;text-align:right;top:738.42px;color:#6e7681">22</div>
<div class="c" style="left:968px;width:63.500px;text-align:right;top:766.92px;color:#6e7681">23</div>
<div class="c" style="left:968px;width:63.500px;text-align:right;top:795.42px;color:#6e7681">24</div>
<div class="c" style="left:968px;width:63.500px;text-align:right;top:823.92px;color:#6e7681">25</div>
<div class="c" style="left:968px;width:63.500px;text-align:right;top:852.42px;color:#6e7681">26</div>
<div class="c" style="left:968px;width:63.500px;text-align:right;top:880.92px;color:#6e7681">27</div>
<div class="c" style="left:968px;width:63.500px;text-align:right;top:909.42px;color:#6e7681">28</div>
<div class="c" style="left:968px;width:63.500px;text-align:right;top:937.92px;color:#6e7681">29</div>
<div class="c" style="left:968px;width:63.500px;text-align:right;top:966.42px;color:#6e7681">30</div>
<div class="c" style="left:968px;width:63.500px;text-align:right;top:994.92px;color:#6e7681">31</div>
<div class="c" style="left:968px;width:63.500px;text-align:right;top:1023.42px;color:#6e7681">32</div>
<div class="c" style="left:968px;width:63.500px;text-align:right;top:1051.92px;color:#6e7681">33</div>
<div class="c" style="left:968px;width:63.500px;text-align:right;top:1080.42px;color:#6e7681">34</div>
<div class="c" style="left:968px;width:63.500px;text-align:right;top:1108.92px;color:#6e7681">35</div>
</div></div>
<div style="left:2139px;top:139px;width:21px;height:203px;background:#464646;"></div>
<div style="left:2139px;top:342px;width:1px;height:773px;background:#191919;"></div>
<span class="t" style="transform:scaleX(0.9853);top:1127.78px;font-size:16.5px;line-height:30px;color:#9d9d9d;left:997.5px;">问题</span>
<span class="t" style="transform:scaleX(0.9559);top:1127.78px;font-size:16.5px;line-height:30px;color:#9d9d9d;left:1067px;">输出</span>
<span class="t" style="transform:scaleX(0.9647);top:1127.78px;font-size:16.5px;line-height:30px;color:#9d9d9d;left:1136px;">调试控制台</span>
<span class="t" style="transform:scaleX(1.0147);top:1127.78px;font-size:16.5px;line-height:30px;color:#e7e7e7;left:1253px;">终端</span>
<div style="left:1251px;top:1157.5px;width:39px;height:1.5px;background:#0078d4;"></div>
<span class="t" style="transform:scaleX(0.9853);top:1127.78px;font-size:16.5px;line-height:30px;color:#9d9d9d;left:1323px;">端口</span>
<svg style="left:977px;top:1185.5px;" width="14" height="14" viewBox="0 0 14 14"><circle cx="7" cy="7" r="5.3" fill="none" stroke="#606060" stroke-width="2.600"/></svg>
<span class="t" style="top:1179.67px;font-size:20px;line-height:30px;color:#cccccc;left:998.5px;font-family:'Liberation Mono',monospace;letter-spacing:-1px;-webkit-text-stroke:0.3px;">PS C:\Users\MATEBOOK14\Desktop\pro\demo\mosaic-generator&gt;</span>
<div style="left:1636px;top:1179px;width:11px;height:25.5px;background:#d0d0d0;"></div>
<svg style="left:1981.5px;top:1129.5px;" width="24" height="24" viewBox="0 0 16 16"><path fill="#cccccc" d="M14 7v1H8v6H7V8H1V7h6V1h1v6h6z"/></svg>
<svg style="left:2007.7px;top:1132.7px;" width="17.6" height="17.6" viewBox="0 0 16 16"><path fill="#cccccc" d="M7.976 10.072l4.357-4.357.62.618L8.284 11h-.618L3 6.333l.619-.618 4.357 4.357z"/></svg>
<svg style="left:2037px;top:1130px;" width="24" height="24" viewBox="0 0 16 16"><path fill="#cccccc" d="M4 8a1 1 0 1 1-2 0 1 1 0 0 1 2 0zm5 0a1 1 0 1 1-2 0 1 1 0 0 1 2 0zm5 0a1 1 0 1 1-2 0 1 1 0 0 1 2 0z"/></svg>
<svg style="left:2074.5px;top:1128.5px;" width="24" height="24" viewBox="0 0 16 16"><path fill="#cccccc" d="M8.024 5.928l-4.357 4.357-.62-.618L7.716 5h.618L13 9.667l-.619.618-4.357-4.357z"/></svg>
<svg style="left:2119px;top:1133.8px;" width="13" height="13" viewBox="0 0 13 13"><path d="M.8.8l11.4 11.4M12.200.8L.8 12.200" stroke="#cccccc" stroke-width="1.5" fill="none"/></svg>
<div style="left:1954px;top:1179px;width:1px;height:156px;background:#2b2b2b;"></div>
<div style="left:1954px;top:1179px;width:20px;height:1px;background:#2b2b2b;"></div>
<div style="left:1954px;top:1179px;width:6px;height:5.5px;background:#5a5a5a;"></div>
<div style="left:1974px;top:1167px;width:1px;height:168px;background:#2b2b2b;"></div>
<div style="left:1975px;top:1233px;width:185px;height:33px;background:#35353a;"></div>
<div style="left:1975px;top:1233px;width:2.5px;height:33px;background:#1470bd;"></div>
<svg style="left:1989px;top:1172px;" width="26" height="24" viewBox="0 0 26 24"><g fill="none" stroke="#cccccc" stroke-width="1.600" transform="skewX(-8) translate(2.400 0)" stroke-linejoin="round"><rect x="2.600" y="2.200" width="20" height="19.600" rx="2.300"/><path d="M6.500 7.500l5.500 4.500-5.500 4.500M13 17h6"/></g></svg>
<svg style="left:1989px;top:1205px;" width="26" height="24" viewBox="0 0 26 24"><g fill="none" stroke="#cccccc" stroke-width="1.600" stroke-linejoin="round"><rect x="2.600" y="2.200" width="20" height="19.600" rx="2.300"/><path d="M6.500 7.500l5.500 4.500-5.500 4.500M13 17h6"/></g></svg>
<svg style="left:1989px;top:1238px;" width="26" height="24" viewBox="0 0 26 24"><g fill="none" stroke="#cccccc" stroke-width="1.600" stroke-linejoin="round"><rect x="2.600" y="2.200" width="20" height="19.600" rx="2.300"/><path d="M6.500 7.500l5.500 4.500-5.500 4.500M13 17h6"/></g></svg>
<span class="t" style="transform:scaleX(0.9869);top:1168.74px;font-size:19.5px;line-height:30px;color:#cccccc;left:2020px;">powershell</span>
<span class="t" style="transform:scaleX(0.9582);top:1201.74px;font-size:19.5px;line-height:30px;color:#cccccc;left:2020px;">Craft</span>
<span class="t" style="transform:scaleX(0.9371);top:1202.26px;font-size:18px;line-height:30px;color:#9a9a9a;left:2070px;">mosaic...</span>
<span class="t" style="transform:scaleX(0.9582);top:1234.74px;font-size:19.5px;line-height:30px;color:#cccccc;left:2020px;">Craft</span>
<span class="t" style="transform:scaleX(0.9371);top:1235.26px;font-size:18px;line-height:30px;color:#9a9a9a;left:2070px;">mosaic...</span>
<span class="t" style="transform:scaleX(0.9708);top:1302.99px;font-size:26px;line-height:34px;color:#e8e8e8;left:1875.7px;-webkit-text-stroke:0.45px;">掘金技术社区 @ Homi</span>
<div style="left:0px;top:1337px;width:51px;height:31px;background:#0078d4;"></div>
<svg style="left:14.7px;top:1341px;" width="21.5" height="21.5" viewBox="0 0 16 16"><path fill="#ffffff" d="M12.904 9.57L8.928 5.596l3.976-3.976-.619-.62L8 5.286v.619l4.285 4.285.62-.618zM3 5.62l4.072 4.07L3 13.763l.619.618L8 10v-.619L3.619 5 3 5.62z"/></svg>
<svg style="left:62.9px;top:1340.6px;" width="21.7" height="21.7" viewBox="0 0 16 16"><path fill="#cccccc" d="M8.6 1c1.6.1 3.1.9 4.2 2 1.3 1.4 2 3.1 2 5.1 0 1.6-.6 3.1-1.6 4.4-1 1.2-2.4 2.1-4 2.4-1.6.3-3.2.1-4.6-.7-1.4-.8-2.5-2-3.1-3.5C.9 9.2.8 7.5 1.3 6c.5-1.6 1.4-2.9 2.8-3.8C5.4 1.3 7 .9 8.6 1zm.5 12.9c1.3-.3 2.5-1 3.4-2.1.8-1.1 1.3-2.4 1.2-3.8 0-1.6-.6-3.2-1.7-4.3-1-1-2.2-1.6-3.6-1.7-1.3-.1-2.7.2-3.8 1-1.1.8-1.9 1.9-2.3 3.3-.4 1.3-.4 2.700.2 4 .6 1.3 1.5 2.3 2.7 3 1.2.7 2.6.9 3.900.6zM7.900 7.500L10.300 5l.7.7-2.400 2.500 2.400 2.500-.7.7-2.400-2.500-2.400 2.500-.7-.7 2.400-2.500-2.400-2.500.7-.7 2.400 2.500z"/></svg>
<span class="t" style="transform:scaleX(0.9685);top:1337.06px;font-size:18px;line-height:30px;color:#cccccc;left:89px;">0</span>
<svg style="left:103.4px;top:1341px;" width="20.9" height="20.9" viewBox="0 0 16 16"><path fill="#cccccc" d="M7.56 1h.88l6.54 12.26-.44.74H1.44L1 13.26 7.56 1zM8 2.28L2.28 13H13.7L8 2.28zM8.625 12v-1h-1.25v1h1.25zm-1.25-2V6h1.25v4h-1.25z"/></svg>
<span class="t" style="transform:scaleX(0.9685);top:1337.06px;font-size:18px;line-height:30px;color:#cccccc;left:129.5px;">0</span>
<span class="t" style="transform:scaleX(0.9758);top:1337.06px;font-size:18px;line-height:30px;color:#cccccc;left:1316px;">行 1，列 1</span>
<span class="t" style="transform:scaleX(0.964);top:1337.06px;font-size:18px;line-height:30px;color:#cccccc;left:1423px;">空格: 4</span>
<span class="t" style="transform:scaleX(0.8974);top:1337.06px;font-size:18px;line-height:30px;color:#cccccc;left:1502px;">UTF-16 LE</span>
<span class="t" style="transform:scaleX(0.8189);top:1337.06px;font-size:18px;line-height:30px;color:#cccccc;left:1605.5px;">CRLF</span>
<span class="t" style="transform:scaleX(0.8105);top:1337.06px;font-size:18px;line-height:30px;color:#cccccc;left:1668px;">CSS</span>
<svg style="left:1721.5px;top:1340.5px;" width="24" height="24" viewBox="0 0 16 16"><path fill="#d8d8d8" fill-rule="evenodd" d="M3.500 2.200C4.500 1.300 6.100 1 7.200 1.600c.400.200.600.500.800.900.200-.400.400-.700.800-.900C9.900 1 11.500 1.300 12.500 2.200c1 1 1.300 2.400 1.100 3.800.800.600 1.400 1.500 1.400 2.500v2.200c0 .300-.100.600-.400.800C12.800 13 10.500 14.300 8 14.300S3.200 13 1.400 11.500c-.300-.200-.400-.500-.400-.800V8.500c0-1 .600-1.900 1.400-2.500-.200-1.400.100-2.800 1.100-3.800zM4.600 3.300c-.600.600-.800 1.700-.500 2.700.900.200 2.300-.100 2.800-.700.400-.500.500-1.500.100-2.100-.500-.600-1.700-.500-2.400.100zm6.800 0c-.700-.600-1.900-.700-2.400-.100-.400.600-.300 1.600.100 2.100.500.600 1.900.900 2.800.700.300-1 .100-2.100-.500-2.700zM3 8.300v3.200c1.400 1 3.200 1.600 5 1.600s3.600-.600 5-1.600V8.300c-.700.200-2.200.200-3.300-.300-.600-.300-1.200-.300-1.700-.200-.500-.100-1.100-.100-1.700.200-1.100.500-2.600.500-3.300.300zm2.700.900c.400 0 .700.300.700.700v1.400c0 .400-.300.700-.700.700S5 11.700 5 11.300V9.900c0-.400.300-.700.700-.700zm4.600 0c.400 0 .700.300.700.700v1.400c0 .400-.300.700-.700.700s-.700-.300-.700-.700V9.900c0-.400.300-.700.700-.700z"/></svg>
<svg style="left:1773px;top:1342px;" width="13.5" height="18.5" viewBox="0 0 13.5 18.5"><path fill="#1ba1e2" d="M2.200 0H13.500V15H2.200z"/><path fill="#0d6fa8" d="M0 2.200A2.200 2.200 0 0 1 2.200 0V15A1.700 1.700 0 0 0 2.200 18.500H13.500V17.300H2.500V16H13.500V15H2.200A2.200 2.200 0 0 0 0 16.800z"/></svg>
<span class="t" style="transform:scaleX(0.9846);top:1337.06px;font-size:18px;line-height:30px;color:#cccccc;left:1797px;">z-reader</span>
<svg style="left:1887.5px;top:1340.5px;" width="22" height="22.6" viewBox="-18 -18.5 36 37"><g fill="#d6d6d6" stroke="#d6d6d6" stroke-width="0"><path d="M-5.300-17.800H.600L2.900-14.100H13.100L15.400-9H-4.300L-1.600-12.300L-3.700-16z"/><path d="M-9.800-9.400L-5.300-17.600M15.500-9L13.100-3.800H-8.600" fill="none" stroke-width=".700"/><g transform="rotate(120)"><path d="M-5.300-17.800H.600L2.900-14.100H13.100L15.400-9H-4.300L-1.600-12.300L-3.700-16z"/><path d="M-9.800-9.400L-5.300-17.600M15.500-9L13.100-3.800H-8.600" fill="none" stroke-width=".700"/></g><g transform="rotate(240)"><path d="M-5.300-17.800H.600L2.900-14.100H13.100L15.400-9H-4.300L-1.600-12.300L-3.700-16z"/><path d="M-9.800-9.400L-5.300-17.600M15.500-9L13.100-3.800H-8.600" fill="none" stroke-width=".700"/></g><path d="M-5.900-3.700H6.100L.200 7z"/></g></svg>
<div style="left:1921px;top:1337px;width:184px;height:31px;background:#7a6400;"></div>
<svg style="left:1936px;top:1341.5px;" width="18.5" height="21" viewBox="0 0 30 34"><path fill="#ffffff" stroke="#ffffff" stroke-width="2.400" stroke-linejoin="round" d="M15 1.400l13.800 7.800v15.600L15 32.600 1.200 24.800V9.200z"/><path fill="#7a6400" d="M9.300 6.300L21.900 13.700Q23.700 14.900 22.500 16.600L17.300 21.100 21.100 27.700 8.400 20.300Q6.600 19.100 7.800 17.400L13 12.900z"/></svg>
<span class="t" style="transform:scaleX(1.0329);top:1337.06px;font-size:18px;line-height:30px;color:#ffffff;left:1962px;">Alt + \ 手动补全</span>
<svg style="left:2116.5px;top:1340.5px;" width="21.5" height="21.5" viewBox="0 0 16 16"><path fill="#cccccc" d="M13.377 10.573a7.63 7.63 0 0 1-.383-2.38V6.195a5.115 5.115 0 0 0-1.268-3.446 5.138 5.138 0 0 0-3.242-1.722c-.694-.072-1.4 0-2.07.227-.67.215-1.28.574-1.794 1.053a4.923 4.923 0 0 0-1.208 1.675 5.067 5.067 0 0 0-.431 2.022v2.2a7.61 7.61 0 0 1-.383 2.37L2 12.343l.479.658h3.505c0 .526.215 1.04.586 1.412.37.37.885.586 1.412.586.526 0 1.04-.215 1.411-.586s.587-.886.587-1.412h3.505l.478-.658-.586-1.77zm-4.69 3.147a.997.997 0 0 1-.705.299.997.997 0 0 1-.706-.3.997.997 0 0 1-.3-.705h1.999a.939.939 0 0 1-.287.706zm-5.515-1.71l.371-1.114a8.633 8.633 0 0 0 .443-2.691V6.004c0-.563.12-1.113.347-1.616.227-.514.55-.969.969-1.34.419-.382.91-.67 1.436-.837.538-.18 1.1-.24 1.65-.18a4.147 4.147 0 0 1 2.597 1.4 4.133 4.133 0 0 1 1.004 2.776v2.01c0 .909.144 1.818.443 2.691l.371 1.113h-9.63v-.012z"/></svg>
</body></html>
